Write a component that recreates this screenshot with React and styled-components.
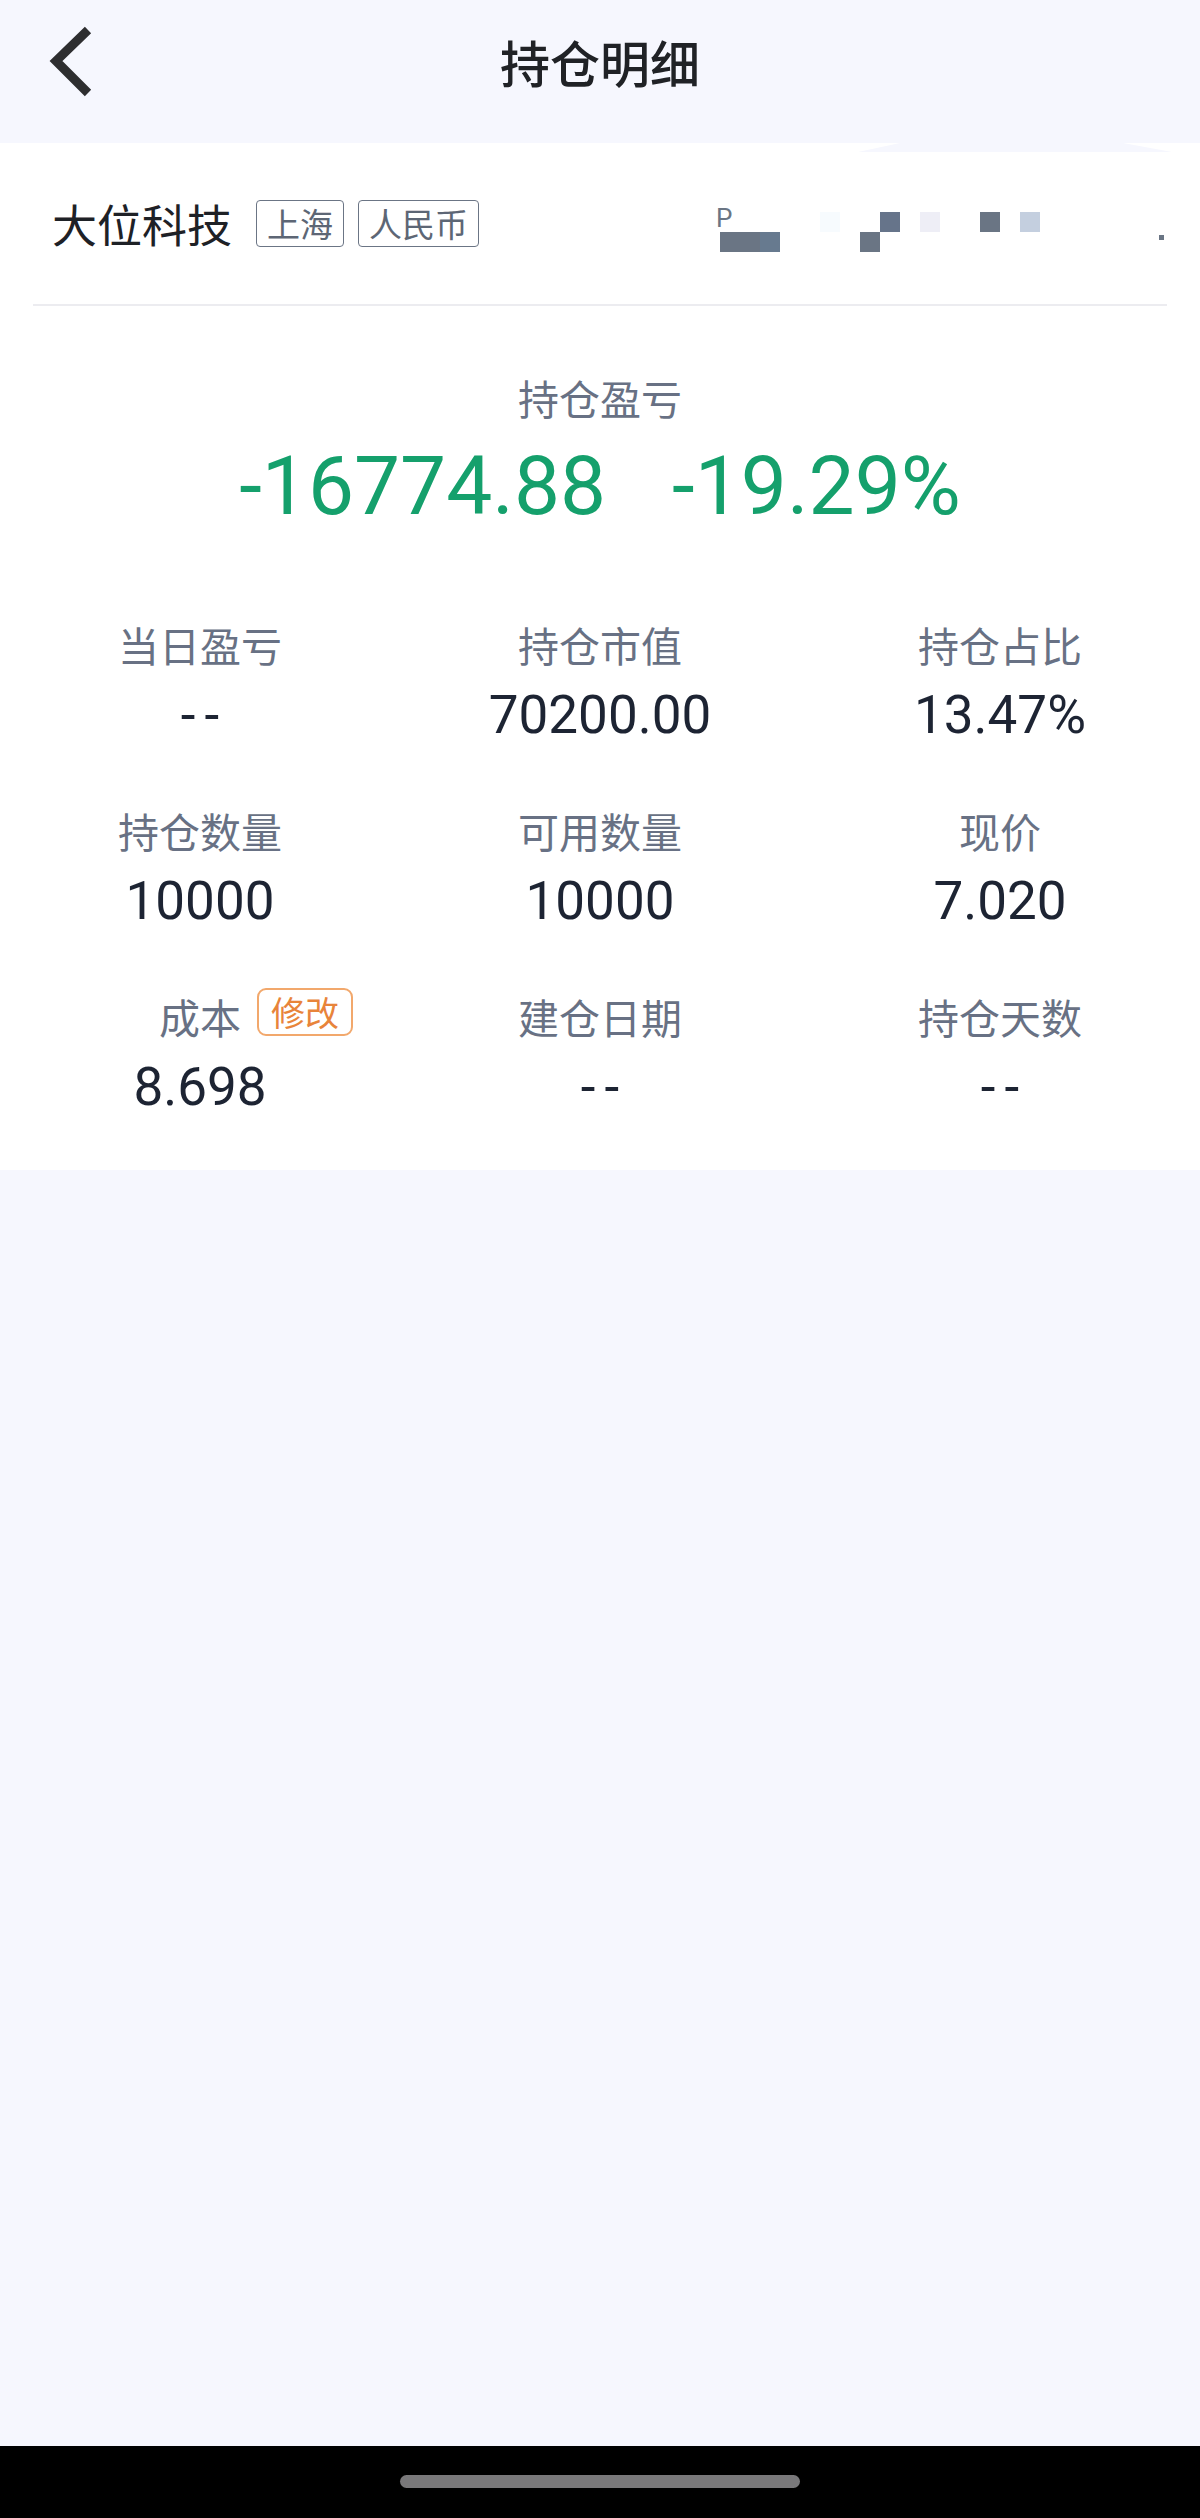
// Position detail page (持仓明细)

import styled, { createGlobalStyle } from "styled-components";

const GlobalStyle = createGlobalStyle`
  html, body {
    margin: 0;
    padding: 0;
    background: #f6f7fe;
    font-family: "Noto Sans CJK SC", "Noto Sans", sans-serif;
  }
  * { box-sizing: border-box; }
`;

const Page = styled.div`
  min-height: 100vh;
  display: flex;
  flex-direction: column;
  background: #f6f7fe;
`;

const Content = styled.div`
  flex: 1;
`;

const Header = styled.header`
  height: 143px;
  padding-bottom: 22px;
  background: #f6f7fe;
  display: grid;
  grid-template-columns: 1fr auto 1fr;
  align-items: center;
`;

const BackButton = styled.button`
  justify-self: start;
  margin-left: 44px;
  margin-top: 3px;
  width: 54px;
  height: 80px;
  padding: 0;
  border: 0;
  background: none;
  cursor: pointer;
  display: flex;
  align-items: center;
  svg { display: block; }
`;

const Title = styled.h1`
  margin: 0;
  font-size: 50px;
  line-height: 70px;
  font-weight: 500;
  color: #202226;
`;

const Card = styled.section`
  position: relative;
  background: #ffffff;
  padding-bottom: 48px;
`;

// little lavender tab left under the header on the right
const TabNotch = styled.svg`
  position: absolute;
  top: 0;
  left: 858px;
  display: block;
`;

const StockRow = styled.div`
  height: 163px;
  margin: 0 33px;
  padding-left: 19px;
  border-bottom: 2px solid #ececf0;
  display: flex;
  align-items: center;
`;

const StockName = styled.span`
  font-size: 45px;
  line-height: 60px;
  color: #1e2126;
  margin-right: 24px;
`;

const Tag = styled.span`
  font-size: 33px;
  line-height: 45px;
  padding: 0 10px;
  margin-right: 14px;
  border: 1.5px solid #6b7585;
  border-radius: 4px;
  color: #5d6675;
`;

const Mosaic = styled.svg`
  margin-left: auto;
  margin-top: 6px;
  display: block;
  overflow: visible;
`;

const PnlBlock = styled.div`
  display: flex;
  flex-direction: column;
  align-items: center;
  padding-top: 63px;
`;

const Label = styled.span`
  position: relative;
  font-size: 41px;
  line-height: 56px;
  color: #687184;
`;

const BigRow = styled.div`
  margin-top: 13px;
  display: flex;
  gap: 66px;
  font-family: Roboto, "Noto Sans CJK SC", sans-serif;
  font-size: 82px;
  line-height: 96px;
  color: #15a06c;
`;

const StatGrid = styled.div`
  margin-top: 82px;
  display: grid;
  grid-template-columns: repeat(3, 1fr);
  row-gap: 52px;
`;

const Stat = styled.div`
  display: flex;
  flex-direction: column;
  align-items: center;
  gap: 8px;
`;

const Value = styled.span`
  font-family: Roboto, "Noto Sans CJK SC", sans-serif;
  font-size: 53px;
  line-height: 70px;
  color: #1d2433;
  letter-spacing: ${(p) => (p.$empty ? "9px" : "0")};
  margin-right: ${(p) => (p.$empty ? "-9px" : "0")};
`;

const EditBadge = styled.span`
  position: absolute;
  top: 0;
  left: calc(100% + 16px);
  height: 48px;
  padding: 0 12px;
  border: 2px solid #f2a86c;
  border-radius: 9px;
  font-size: 34px;
  line-height: 44px;
  color: #e8843a;
  white-space: nowrap;
`;

const NavBar = styled.div`
  height: 72px;
  background: #000000;
  display: flex;
  justify-content: center;
  padding-top: 29px;
`;

const HomePill = styled.div`
  width: 400px;
  height: 13px;
  border-radius: 7px;
  background: #79787a;
`;

const stats = [
  { label: "当日盈亏", value: "--" },
  { label: "持仓市值", value: "70200.00" },
  { label: "持仓占比", value: "13.47%" },
  { label: "持仓数量", value: "10000" },
  { label: "可用数量", value: "10000" },
  { label: "现价", value: "7.020" },
  { label: "成本", value: "8.698", editable: true },
  { label: "建仓日期", value: "--" },
  { label: "持仓天数", value: "--" },
];

// pixelated (redacted) stock code area
const mosaicCells = [
  { x: 4, y: 25, w: 40, h: 20, c: "#6a7584" },
  { x: 44, y: 25, w: 20, h: 20, c: "#677a8f" },
  { x: 104, y: 5, w: 20, h: 20, c: "#f7fbfe" },
  { x: 164, y: 5, w: 20, h: 20, c: "#66748a" },
  { x: 144, y: 25, w: 20, h: 20, c: "#6a7584" },
  { x: 204, y: 5, w: 20, h: 20, c: "#eeeef6" },
  { x: 264, y: 5, w: 20, h: 20, c: "#6a7584" },
  { x: 304, y: 5, w: 20, h: 20, c: "#c4cfdf" },
  { x: 443, y: 28, w: 5, h: 5, c: "#6a7584" },
];

const App = () => {
  return (
    <Page>
      <GlobalStyle />
      <Content>
        <Header>
          <BackButton aria-label="返回">
            <svg width="54" height="80" viewBox="0 0 54 80">
              <polyline
                points="44,8 12,39 44,71"
                fill="none"
                stroke="#2e2e30"
                strokeWidth="9"
                strokeLinejoin="miter"
              />
            </svg>
          </BackButton>
          <Title>持仓明细</Title>
          <div />
        </Header>

        <Card>
          <TabNotch width="314" height="9" viewBox="0 0 314 9">
            <polygon points="42,0 265,0 314,9 0,9" fill="#f6f7fe" />
          </TabNotch>

          <StockRow>
            <StockName>大位科技</StockName>
            <Tag>上海</Tag>
            <Tag>人民币</Tag>
            <Mosaic width="451" height="52" viewBox="0 -6 451 52">
              <text x="0" y="20" fontSize="26" fill="#6a7584" fontFamily="Roboto, sans-serif">P</text>
              {mosaicCells.map((m, i) => (
                <rect key={i} x={m.x} y={m.y} width={m.w} height={m.h} fill={m.c} />
              ))}
            </Mosaic>
          </StockRow>

          <PnlBlock>
            <Label>持仓盈亏</Label>
            <BigRow>
              <span>-16774.88</span>
              <span>-19.29%</span>
            </BigRow>
          </PnlBlock>

          <StatGrid>
            {stats.map((s) => (
              <Stat key={s.label}>
                <Label>
                  {s.label}
                  {s.editable && <EditBadge>修改</EditBadge>}
                </Label>
                <Value $empty={s.value === "--"}>{s.value}</Value>
              </Stat>
            ))}
          </StatGrid>
        </Card>
      </Content>

      <NavBar>
        <HomePill />
      </NavBar>
    </Page>
  );
};

export default App;
